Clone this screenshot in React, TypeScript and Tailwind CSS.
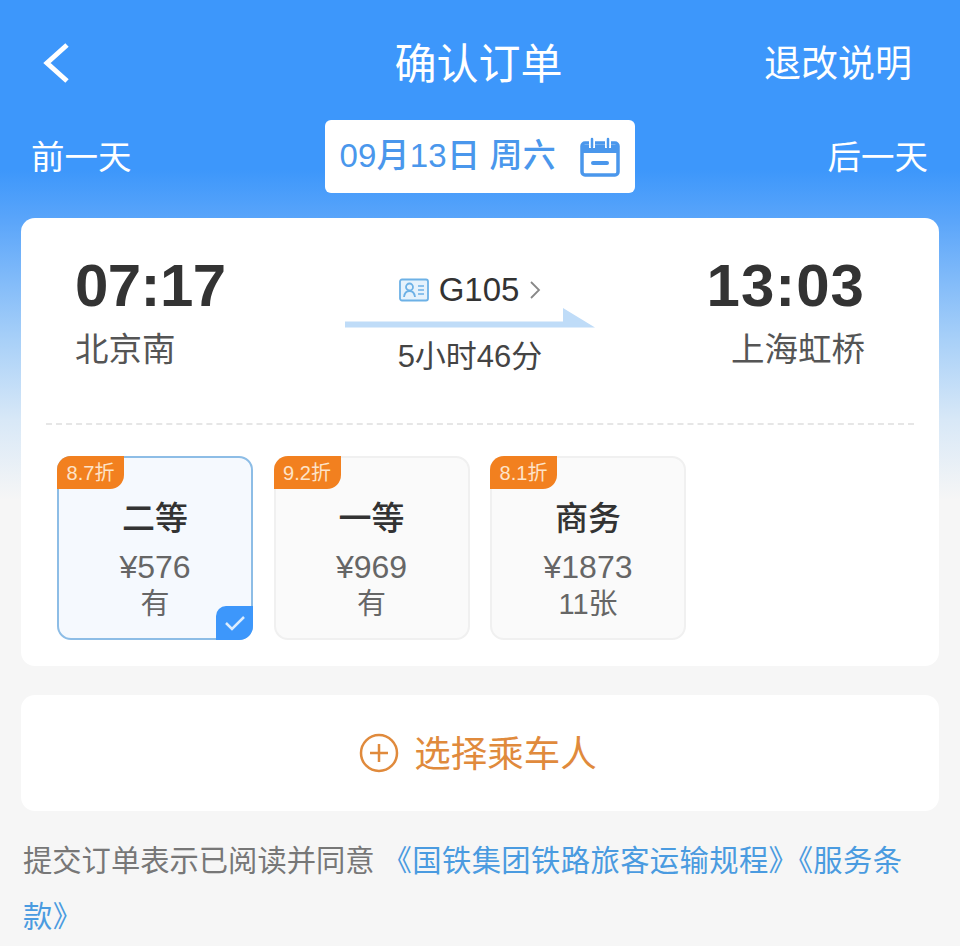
const SEATS = [
  { discount: '8.7折', name: '二等', price: '¥576', left: '有', selected: true },
  { discount: '9.2折', name: '一等', price: '¥969', left: '有', selected: false },
  { discount: '8.1折', name: '商务', price: '¥1873', left: '11张', selected: false },
];

function CalendarIcon() {
  return (
    <svg width="40" height="40" viewBox="0 0 40 40" fill="none">
      <rect x="2" y="6" width="36" height="32" rx="3" fill="none" stroke="#4a97ec" strokeWidth="3.500" />
      <path d="M2 8h36v8H2z" fill="#4a97ec" />
      <path d="M12 1v10M28 1v10" stroke="#fff" strokeWidth="6" />
      <path d="M12 2v8M28 2v8" stroke="#4a97ec" strokeWidth="2.500" strokeLinecap="round" />
      <path d="M13 26h14" stroke="#4a97ec" strokeWidth="4" strokeLinecap="round" />
    </svg>
  );
}

function TrainIdIcon() {
  return (
    <svg width="30" height="24" viewBox="0 0 30 24" fill="none" stroke="#6db1e6" strokeWidth="1.800">
      <rect x="1" y="1.500" width="28" height="21" rx="2" fill="#e6f2fc" />
      <circle cx="10.500" cy="9" r="3.500" />
      <path d="M5 19c.5-4 2.500-6 5.500-6s5 2 5.500 6" />
      <path d="M19 8h6M19 12h6M19 16h6" strokeWidth="1.500" />
    </svg>
  );
}

function DirectionArrow() {
  return (
    <svg width="250" height="20" viewBox="0 0 250 20" className="-mt-[4px] block">
      <path d="M0 13.500h218V0l32 19.500H0z" fill="#bfdcf8" />
    </svg>
  );
}

function SeatCard({ seat }: { seat: (typeof SEATS)[number] }) {
  return (
    <div
      className={
        seat.selected
          ? 'relative flex h-[184px] w-[196px] flex-col items-center rounded-[14px] border-2 border-[#8dbde6] bg-[#f5f9fe] pt-[40px]'
          : 'relative flex h-[184px] w-[196px] flex-col items-center rounded-[14px] border-2 border-[#f0f0f0] bg-[#fafafa] pt-[40px]'
      }
    >
      <div className="absolute -top-[2px] -left-[2px] flex h-[33px] w-[67px] items-center justify-center rounded-tl-[14px] rounded-br-[14px] bg-[#f2801f] text-[20px] text-[#fde3c8]">
        {seat.discount}
      </div>
      <div className="text-[33px] leading-[42px] font-medium text-[#333]">{seat.name}</div>
      <div className="mt-[8px] text-[32px] leading-[38px] text-[#666]">{seat.price}</div>
      <div className="text-[29px] leading-[36px] text-[#666]">{seat.left}</div>
      {seat.selected && (
        <div className="absolute -right-[2px] -bottom-[2px] flex h-[34px] w-[37px] items-center justify-center rounded-tl-[10px] rounded-br-[14px] bg-[#3d97fb]">
          <svg width="22" height="16" viewBox="0 0 22 16" fill="none" stroke="#dcecfd" strokeWidth="2.500">
            <path d="M2 8l6 6L20 2" />
          </svg>
        </div>
      )}
    </div>
  );
}

export default function App() {
  return (
    <div className="h-[946px] w-full overflow-hidden bg-[linear-gradient(180deg,#3d97fb_0px,#3d97fb_170px,#5aa5fa_220px,#a8d0f8_340px,#d8e8f7_420px,#f6f6f6_500px)] px-[21px] font-['Liberation_Sans','Noto_Sans_CJK_SC',sans-serif]">
      {/* header */}
      <div className="relative flex h-[120px] items-center justify-between pt-[6px] pr-[27px] pl-[21px] text-white">
        <svg width="28" height="42" viewBox="0 0 28 42" fill="none" stroke="#fff" strokeWidth="5">
          <path d="M25 3L5 21l20 18" />
        </svg>
        <div className="absolute inset-x-0 top-[40px] pr-[3px] text-center text-[42px] leading-[50px]">确认订单</div>
        <div className="pt-[4px] text-[37px] leading-[50px]">退改说明</div>
      </div>

      {/* date switcher */}
      <div className="flex h-[73px] items-center justify-between pr-[11px] pl-[10px] text-white">
        <div className="pt-[4px] text-[33.500px]">前一天</div>
        <div className="flex h-[73px] w-[310px] items-center gap-[24px] rounded-[6px] bg-white pl-[15px] text-[#4a97ec]">
          <span className="pb-[2px] text-[33px] font-medium tracking-[0.2px] whitespace-nowrap">09月13日 周六</span>
          <CalendarIcon />
        </div>
        <div className="pt-[4px] text-[33.500px]">后一天</div>
      </div>

      {/* train card */}
      <div className="mt-[25px] h-[448px] rounded-[14px] bg-white px-[25px]">
        <div className="flex h-[205px] items-start justify-between pt-[30px] pr-[49px] pl-[29px]">
          <div>
            <div className="text-[60px] leading-[76px] font-bold tracking-[-0.6px] text-[#333]">07:17</div>
            <div className="pt-[2px] text-[33.500px] leading-[48px] text-[#555]">北京南</div>
          </div>
          <div className="ml-[8px] flex w-[250px] flex-col items-center pt-[20px]">
            <div className="flex h-[44px] items-center gap-[10px] text-[33px] text-[#333]">
              <TrainIdIcon />
              <span>G105</span>
              <svg width="12" height="20" viewBox="0 0 12 20" fill="none" stroke="#888" strokeWidth="1.800">
                <path d="M2 2l8 8-8 8" />
              </svg>
            </div>
            <DirectionArrow />
            <div className="mt-[9px] text-[31px] leading-[40px] text-[#444]">5小时46分</div>
          </div>
          <div className="flex flex-col items-end">
            <div className="text-[60px] leading-[76px] font-bold tracking-[1px] text-[#333]">13:03</div>
            <div className="pt-[2px] text-[33.500px] leading-[48px] text-[#555]">上海虹桥</div>
          </div>
        </div>
        <div className="border-t-2 border-dashed border-[#e6e6e6]" />
        <div className="mt-[31px] flex gap-[20.500px] pl-[11px]">
          {SEATS.map((seat) => (
            <SeatCard key={seat.name} seat={seat} />
          ))}
        </div>
      </div>

      {/* passenger */}
      <div className="mt-[29px] flex h-[116px] items-center justify-center gap-[15px] rounded-[14px] bg-white pr-[4px] text-[#e08a3c]">
        <svg width="40" height="40" viewBox="0 0 40 40" fill="none" stroke="#e08a3c" strokeWidth="2.500">
          <circle cx="20" cy="20" r="18" />
          <path d="M20 11v18M11 20h18" />
        </svg>
        <span className="pt-[4px] text-[36.500px]">选择乘车人</span>
      </div>

      {/* agreement */}
      <div className="mt-[22px] pl-[2px] text-[29.300px] leading-[56px] whitespace-nowrap text-[#777]">
        提交订单表示已阅读并同意
        <span className="ml-[8px] tracking-[0.4px] text-[#4a9be0]">
          《国铁集团铁路旅客运输规程》《服务条
          <br />
          款》
        </span>
      </div>
    </div>
  );
}
